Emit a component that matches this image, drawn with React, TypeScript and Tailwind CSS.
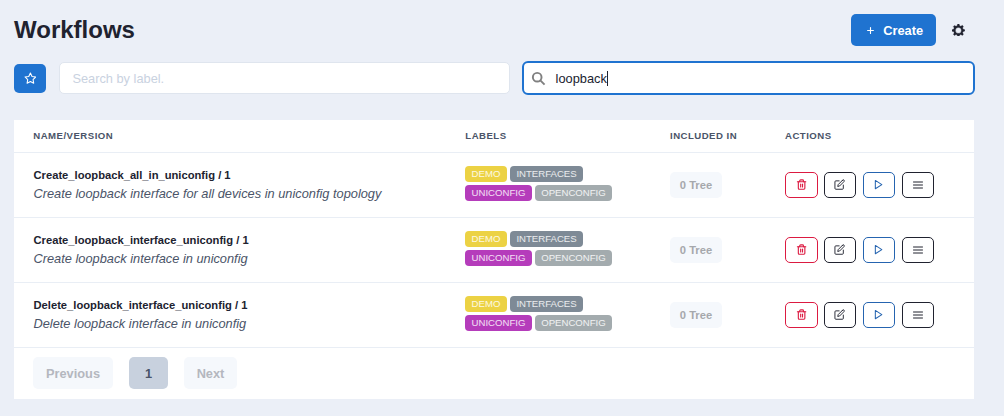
import React from "react";
import { FiEdit, FiMenu, FiPlay, FiStar, FiTrash2 } from "react-icons/fi";

const workflows = [
  { name: "Create_loopback_all_in_uniconfig / 1", description: "Create loopback interface for all devices in uniconfig topology" },
  { name: "Create_loopback_interface_uniconfig / 1", description: "Create loopback interface in uniconfig" },
  { name: "Delete_loopback_interface_uniconfig / 1", description: "Delete loopback interface in uniconfig" },
];

const labels = [
  { text: "DEMO", style: "bg-[#ecd244] w-[42px]" },
  { text: "INTERFACES", style: "bg-[#7e8a96] w-[73px]" },
  { text: "UNICONFIG", style: "bg-[#b53cbb] w-[67px]" },
  { text: "OPENCONFIG", style: "bg-[#a3abae] w-[77px]" },
];

const columns = "grid grid-cols-[432px_205px_115px_1fr] pl-[19px] border-b border-[#e9eef5]";

function GearIcon() {
  return (
    <svg viewBox="0 0 14 14" className="h-[12.8px] w-[12.8px]" fill="currentColor" stroke="currentColor" strokeWidth="0.3">
      <path
        fillRule="evenodd"
        d="M14,7.77 L14,6.17 L12.06,5.53 L11.61,4.44 L12.49,2.6 L11.36,1.47 L9.55,2.38 L8.46,1.93 L7.77,0.01 L6.17,0.01 L5.54,1.95 L4.43,2.4 L2.59,1.52 L1.46,2.65 L2.37,4.46 L1.92,5.55 L0,6.23 L0,7.82 L1.94,8.46 L2.39,9.55 L1.51,11.39 L2.64,12.52 L4.45,11.61 L5.54,12.06 L6.23,13.98 L7.82,13.98 L8.45,12.04 L9.56,11.59 L11.4,12.47 L12.53,11.34 L11.61,9.53 L12.08,8.44 L14,7.75 Z M7,10.2 A3.2,3.2 0 1 1 7,3.8 A3.2,3.2 0 1 1 7,10.2 Z"
      />
    </svg>
  );
}

function SearchIcon() {
  return (
    <svg viewBox="0 0 24 24" className="h-[13px] w-[13px] shrink-0 overflow-visible text-[#808080]" fill="none" stroke="currentColor" strokeWidth="3.6">
      <circle cx="9.6" cy="9.6" r="8" />
      <path d="M15.4 15.4l7.8 7.8" />
    </svg>
  );
}

function PlusIcon() {
  return (
    <svg viewBox="0 0 8 8" className="h-[7px] w-[7px]" stroke="currentColor" strokeWidth="1.3" strokeLinecap="round">
      <path d="M4 .7v6.6M.7 4h6.6" />
    </svg>
  );
}

const actionButton = "flex h-[26px] items-center justify-center rounded-[5px] border";

function Actions() {
  return (
    <div className="flex h-[26px] self-center">
      <button aria-label="Delete" className={`${actionButton} w-[33px] mr-[6px] pb-px border-[#dc1a41] text-[#dc1a41]`}><FiTrash2 size={11.2} strokeWidth={2.4} /></button>
      <button aria-label="Edit" className={`${actionButton} w-[32px] mr-[7px] pb-px border-[#20222f] text-[#20222f]`}><FiEdit size={11.2} /></button>
      <button aria-label="Execute" className={`${actionButton} w-[32px] mr-[7px] pr-px pb-px border-[#2564b0] text-[#2564b0]`}><FiPlay size={11.2} strokeWidth={2.2} /></button>
      <button aria-label="Menu" className={`${actionButton} w-[32px] pr-px pb-px border-[#20222f] text-[#20222f]`}><FiMenu size={12} /></button>
    </div>
  );
}

export default function App() {
  return (
    <div className="h-[416px] bg-[#ebeff7] pt-[14px] pr-[29px] pl-[14px] font-['Liberation_Sans',Arial,sans-serif] text-[12.8px] text-[#20222f]">
      <header className="flex h-8 items-center justify-between">
        <h1 className="text-[24px] leading-8 font-bold">Workflows</h1>
        <div className="flex items-center">
          <button className="flex h-8 w-[85px] items-center rounded-[5px] bg-[#1f73d0] pl-[16px] font-bold text-white">
            <PlusIcon />
            <span className="ml-[9px] pt-px">Create</span>
          </button>
          <button aria-label="Settings" className="mr-[10px] ml-[16px]"><GearIcon /></button>
        </div>
      </header>

      <div className="mt-[14px] flex h-[36px] items-center">
        <button aria-label="Favorites" className="mt-[1px] flex h-[29px] w-8 items-center justify-center rounded-[5px] bg-[#1f73d0] text-white">
          <FiStar size={12.8} />
        </button>
        <div className="ml-[13px] flex h-8 w-[451px] shrink-0 items-center rounded-[5px] border border-[#dfe5ee] bg-white pt-[2px] pl-[12.4px] text-[#c9d2df]">Search by label.</div>
        <div className="ml-[12px] flex h-[34px] w-[453px] shrink-0 items-center rounded-[6px] border-2 border-[#1f73d0] bg-white pl-[8px]">
          <SearchIcon />
          <span className="ml-[10.6px] pt-[2px]">loopback</span>
          <span className="h-[15px] w-px bg-[#20222f]" />
        </div>
      </div>

      <main className="mt-6 mr-px h-[279px] bg-white">
        <div className={`${columns} h-[33px] items-center text-[9.6px] font-bold tracking-[0.48px] text-[#4a5468]`}>
          <span className="pl-[0.3px]">NAME/VERSION</span>
          <span className="pl-[0.3px]">LABELS</span>
          <span>INCLUDED IN</span>
          <span>ACTIONS</span>
        </div>
        {workflows.map((workflow) => (
          <div key={workflow.name} className={`${columns} h-[65px]`}>
            <div className="pt-[13px] pl-[0.5px]">
              <div className="text-[11.2px] leading-[19px] font-bold">{workflow.name}</div>
              <div className="text-[12.8px] leading-[17px] text-[#4a5468] italic">{workflow.description}</div>
            </div>
            <div className="flex w-[160px] flex-wrap content-start gap-x-[3px] gap-y-[3px] pt-[13px]">
              {labels.map((label) => (
                <span key={label.text} className={`flex h-4 items-center justify-center rounded-[4px] text-[9.6px] text-white/85 ${label.style}`}>{label.text}</span>
              ))}
            </div>
            <div className="flex h-[26px] w-[52px] items-center justify-center self-center rounded-[5px] bg-[#f5f8fc] text-[11.2px] font-bold text-[#a6a8ac]">0 Tree</div>
            <Actions />
          </div>
        ))}
        <nav className="flex gap-4 pt-[9px] pl-[19px] font-bold">
          <button className="h-8 w-[80px] rounded-[5px] bg-[#f5f8fc] pt-px text-[#b4b7bf]">Previous</button>
          <button className="h-8 w-[39px] rounded-[5px] bg-[#c8d1de] pt-px text-[#4a5468]">1</button>
          <button className="h-8 w-[53px] rounded-[5px] bg-[#f5f8fc] pt-px text-[#b4b7bf]">Next</button>
        </nav>
      </main>
    </div>
  );
}
